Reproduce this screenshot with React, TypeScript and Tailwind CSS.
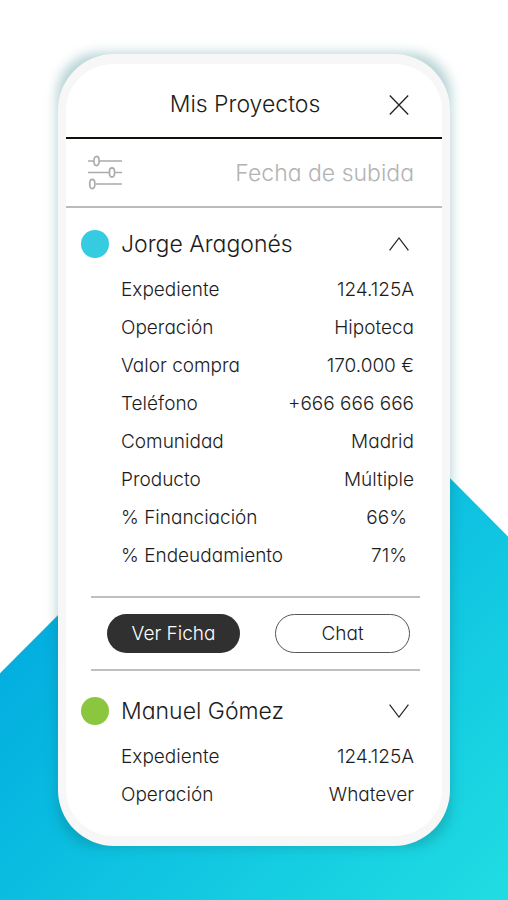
/**
 * Projects screen
 * Phone mockup listing client files, with collapsible detail rows
 */

import { useState } from "react";

interface Detail {
  label: string;
  value: string;
}

interface Project {
  name: string;
  dotClass: string;
  summary: Detail[];
  details: Detail[];
  expanded: boolean;
}

const PROJECTS: Project[] = [
  {
    name: "Jorge Aragonés",
    dotClass: "bg-[#35cbe0]",
    summary: [
      { label: "Expediente", value: "124.125A" },
      { label: "Operación", value: "Hipoteca" },
    ],
    details: [
      { label: "Valor compra", value: "170.000 €" },
      { label: "Teléfono", value: "+666 666 666" },
      { label: "Comunidad", value: "Madrid" },
      { label: "Producto", value: "Múltiple" },
      { label: "% Financiación", value: "66%" },
      { label: "% Endeudamiento", value: "71%" },
    ],
    expanded: true,
  },
  {
    name: "Manuel Gómez",
    dotClass: "bg-[#8bc63f]",
    summary: [
      { label: "Expediente", value: "124.125A" },
      { label: "Operación", value: "Whatever" },
    ],
    details: [],
    expanded: false,
  },
];

function CloseIcon() {
  return (
    <svg width="20" height="20" viewBox="0 0 20 20" fill="none" stroke="#222" strokeWidth="1.3">
      <path d="M.8.5 19.2 19.5M19.2.5.8 19.5" />
    </svg>
  );
}

function ChevronIcon({ up }: { up: boolean }) {
  return (
    <svg width="20" height="14" viewBox="0 0 20 14" fill="none" stroke="#222" strokeWidth="1.2">
      <path d={up ? "M.6 13.3 10 1 19.4 13.3" : "M.6.7 10 13 19.4.7"} />
    </svg>
  );
}

function SlidersIcon() {
  return (
    <svg width="35" height="35" viewBox="0 0 35 35" fill="none" stroke="#ababab" strokeWidth="1.7">
      <path d="M0 6h5.5M11.5 6H34M0 17.5h21M27 17.5h7M8 29h26" />
      <ellipse cx="8.5" cy="6" rx="2.6" ry="4.6" />
      <ellipse cx="24" cy="17.5" rx="2.6" ry="4.6" />
      <ellipse cx="4.3" cy="29" rx="2.6" ry="4.6" />
    </svg>
  );
}

function ProjectCard({ project }: { project: Project }) {
  const [open, setOpen] = useState(project.expanded);
  const rows = open ? [...project.summary, ...project.details] : project.summary;

  return (
    <section className="pt-[9px]">
      <div className="flex h-[54px] items-center pr-[33px] pl-[15px]">
        <span className={`size-7 shrink-0 rounded-full ${project.dotClass}`} />
        <h2 className="ml-3 flex-1 text-[23px]">{project.name}</h2>
        <button type="button" aria-label={project.name} aria-expanded={open} onClick={() => setOpen(!open)}>
          <ChevronIcon up={open} />
        </button>
      </div>
      <dl className="pr-7 pl-[55px] text-[19px]">
        {rows.map((row) => (
          <div key={row.label} className="flex h-[38px] items-center justify-between">
            <dt>{row.label}</dt>
            <dd className={row.value.endsWith("%") ? "pr-[7px]" : ""}>{row.value}</dd>
          </div>
        ))}
      </dl>
      {open && project.details.length > 0 && (
        <div className="mt-[21px] mr-[22px] mb-1 ml-[25px] flex h-[75px] items-center gap-[35px] border-y-2 border-[#bfbfbf] pr-[10px] pl-4 text-[19px]">
          <button type="button" className="h-[39px] flex-1 rounded-full bg-[#303030] pt-px text-white">
            Ver Ficha
          </button>
          <button type="button" className="h-[39px] flex-1 rounded-full border border-[#555] pt-px">
            Chat
          </button>
        </div>
      )}
    </section>
  );
}

export default function App() {
  return (
    <main className="relative isolate min-h-screen bg-white px-[58px] py-[54px] font-['Inter',sans-serif] font-light text-[#1c1c1c] [font-feature-settings:'cv11']">
      <div className="absolute inset-0 -z-10 bg-linear-135 from-[#00a3de] from-35% to-[#20dde2] [clip-path:polygon(0_74.8%,63.5%_38.9%,100%_59.6%,100%_100%,0_100%)]" />
      <div className="relative">
        <div className="absolute -inset-px -z-10 rounded-[42px] bg-[#0b6b70]/30 blur-[6px]" />
        <div className="min-h-[792px] rounded-[56px] border-x-8 border-y-10 border-[#f7f7f8] bg-white">
          <header className="grid h-[75px] grid-cols-[1fr_auto_1fr] items-center border-b-2 border-[#11110a] pt-2 pr-[33px] pl-[15px]">
            <h1 className="col-start-2 text-[23px]">Mis Proyectos</h1>
            <button type="button" aria-label="Cerrar" className="justify-self-end">
              <CloseIcon />
            </button>
          </header>
          <div className="flex h-[69px] items-center justify-between border-b-2 border-[#bbb] pr-7 pl-[22px]">
            <button type="button" aria-label="Filtros">
              <SlidersIcon />
            </button>
            <button type="button" className="pt-0.5 text-[23px] text-[#b3b3b3]">
              Fecha de subida
            </button>
          </div>
          {PROJECTS.map((project) => (
            <ProjectCard key={project.name} project={project} />
          ))}
        </div>
      </div>
    </main>
  );
}
